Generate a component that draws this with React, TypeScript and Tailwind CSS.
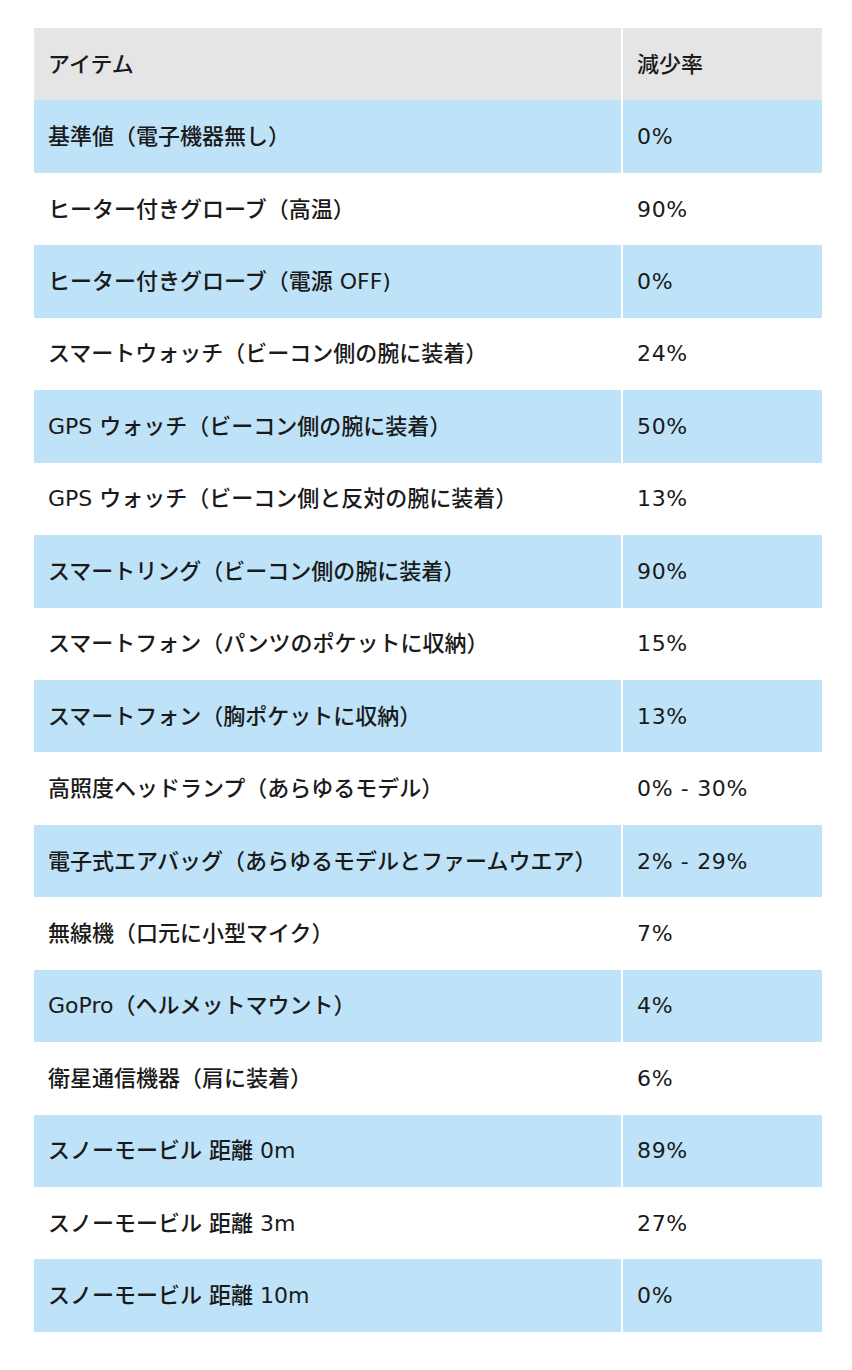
const rows: [string, string][] = [
  ['基準値（電子機器無し）', '0%'],
  ['ヒーター付きグローブ（高温）', '90%'],
  ['ヒーター付きグローブ（電源 OFF)', '0%'],
  ['スマートウォッチ（ビーコン側の腕に装着）', '24%'],
  ['GPS ウォッチ（ビーコン側の腕に装着）', '50%'],
  ['GPS ウォッチ（ビーコン側と反対の腕に装着）', '13%'],
  ['スマートリング（ビーコン側の腕に装着）', '90%'],
  ['スマートフォン（パンツのポケットに収納）', '15%'],
  ['スマートフォン（胸ポケットに収納）', '13%'],
  ['高照度ヘッドランプ（あらゆるモデル）', '0% - 30%'],
  ['電子式エアバッグ（あらゆるモデルとファームウエア）', '2% - 29%'],
  ['無線機（口元に小型マイク）', '7%'],
  ['GoPro（ヘルメットマウント）', '4%'],
  ['衛星通信機器（肩に装着）', '6%'],
  ['スノーモービル 距離 0m', '89%'],
  ['スノーモービル 距離 3m', '27%'],
  ['スノーモービル 距離 10m', '0%'],
];

export default function App() {
  return (
    <div className="min-h-[1370px] bg-white pt-[28px] pl-[34px] font-['DejaVu_Sans','Noto_Sans_CJK_JP',sans-serif] text-[22px] font-medium text-[#1a1a1a]">
      <table className="w-[788px] border-collapse">
        <thead>
          <tr className="h-[72.44px] bg-[#e5e5e5]">
            <th className="w-[588px] border-r-2 border-white pl-[14px] text-left font-medium">アイテム</th>
            <th className="pl-[14px] text-left font-medium">減少率</th>
          </tr>
        </thead>
        <tbody>
          {rows.map(([item, rate], i) => (
            <tr key={i} className={`h-[72.44px] ${i % 2 === 0 ? 'bg-[#bee3f8]' : 'bg-white'}`}>
              <td className="border-r-2 border-white pl-[14px]">{item}</td>
              <td className="pl-[14px] tracking-[0.03em]">{rate}</td>
            </tr>
          ))}
        </tbody>
      </table>
    </div>
  );
}
